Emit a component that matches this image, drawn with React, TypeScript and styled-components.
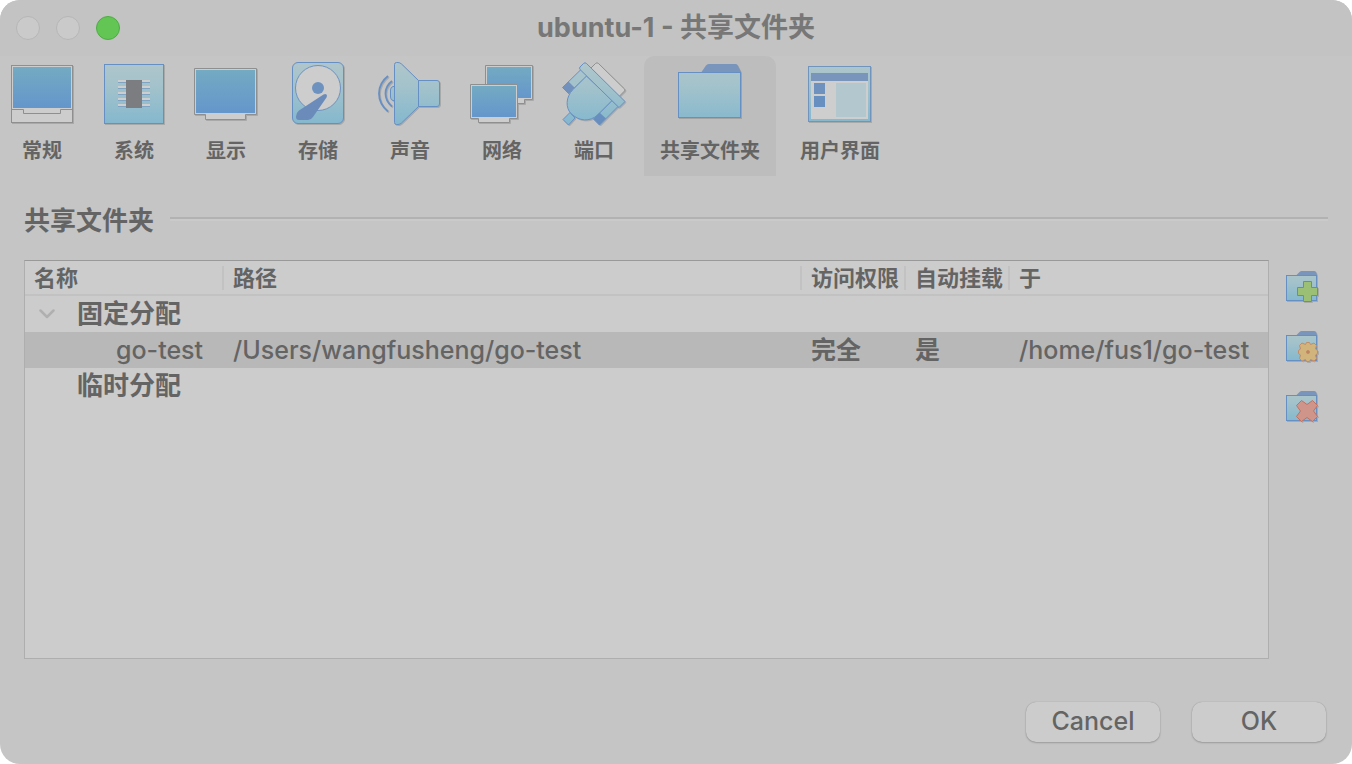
import React, { ReactNode, useState } from 'react';
import styled, { createGlobalStyle } from 'styled-components';

const FONT = 'Inter, "Noto Sans CJK SC", sans-serif';

const GlobalStyle = createGlobalStyle`
  *, *::before, *::after { box-sizing: border-box; }
  body { margin: 0; background: #fff; font-family: ${FONT}; color: #646464; }
  button { font-family: inherit; color: inherit; border: 0; padding: 0; background: none; }
`;

const Window = styled.main`
  display: flex;
  flex-direction: column;
  min-height: 100vh;
  border-radius: 20px;
  overflow: hidden;
  background: #c5c5c5;
`;

const TitleBar = styled.header`
  display: grid;
  grid-template-columns: 1fr auto 1fr;
  align-items: center;
  height: 56px;
  padding: 0 16px;
  background: #c3c3c3;
`;

const Lights = styled.div`
  display: flex;
  gap: 16px;
`;

const Light = styled.button<{ $on?: boolean }>`
  width: 24px;
  height: 24px;
  border-radius: 50%;
  border: 1px solid ${(p) => (p.$on ? '#4fac45' : '#b6b6b6')};
  background: ${(p) => (p.$on ? '#62c554' : '#cacaca')};
`;

const Title = styled.h1`
  margin: 0;
  font-size: 27px;
  line-height: 32px;
  font-weight: 700;
  color: #777;
`;

const Toolbar = styled.nav`
  display: flex;
  gap: 8px;
`;

const Tab = styled.button<{ $active: boolean }>`
  display: flex;
  flex-direction: column;
  align-items: center;
  gap: 10px;
  min-width: 84px;
  height: 120px;
  padding: 6px 10px 0;
  border-radius: 10px 10px 0 0;
  background: ${(p) => (p.$active ? '#bdbdbd' : 'transparent')};
  font-size: 20px;
  line-height: 30px;
  font-weight: 700;
  white-space: nowrap;
`;

const TabLabel = styled.span`
  padding: 0 6px;
`;

const IconSvg = styled.svg`
  display: block;
  flex: none;
  overflow: visible;
  filter: drop-shadow(1px 1px 0 rgba(0, 0, 0, 0.14));
`;

const Section = styled.section`
  display: flex;
  flex: 1;
  flex-direction: column;
  gap: 24px;
  padding: 26px 24px 0;
`;

const Heading = styled.div`
  display: flex;
  align-items: center;
  gap: 16px;
  height: 34px;
`;

const HeadingText = styled.h2`
  margin: 0;
  padding-top: 4px;
  font-size: 26px;
  line-height: 34px;
  font-weight: 700;
`;

const Rule = styled.div`
  flex: 1;
  height: 4px;
  border-top: 2px solid #b2b2b2;
  border-bottom: 2px solid #cacaca;
`;

const Body = styled.div`
  display: flex;
  flex: 1;
  gap: 17px;
`;

const Panel = styled.div`
  flex: 1;
  border: 1px solid #aeaeae;
  border-top-color: #999;
  background: #cccccc;
`;

const Table = styled.table`
  width: 100%;
  table-layout: fixed;
  border-collapse: separate;
  border-spacing: 0;
`;

const Col = styled.col<{ $width?: number }>`
  width: ${(p) => (p.$width ? `${p.$width}px` : 'auto')};
`;

const Head = styled.th`
  position: relative;
  height: 35px;
  padding: 0 0 0 9px;
  border-bottom: 2px solid #c2c2c2;
  text-align: left;
  font-size: 22px;
  line-height: 30px;
  font-weight: 700;
  white-space: nowrap;

  &:not(:last-child)::after {
    content: '';
    position: absolute;
    top: 5px;
    right: 0;
    width: 2px;
    height: 24px;
    background: #c2c2c2;
  }
`;

const Row = styled.tr<{ $selected?: boolean }>`
  background: ${(p) => (p.$selected ? '#b8b8b8' : 'transparent')};
`;

const Cell = styled.td<{ $child?: boolean; $cjk?: boolean }>`
  height: 36px;
  padding: 0 0 0 ${(p) => (p.$child ? 91 : 9)}px;
  font-size: 25px;
  line-height: 36px;
  font-weight: ${(p) => (p.$cjk ? 700 : 500)};
  white-space: nowrap;
`;

const Group = styled.th`
  height: 36px;
  padding: 0 0 0 10px;
  text-align: left;
  font-size: 26px;
  line-height: 36px;
  font-weight: 700;
`;

const GroupLabel = styled.div`
  display: flex;
  align-items: center;
  gap: 18px;
`;

const Expander = styled.button`
  display: flex;
  align-items: center;
  justify-content: center;
  width: 24px;
  height: 24px;
`;

const Spacer = styled.span`
  width: 24px;
`;

const Actions = styled.div`
  display: flex;
  flex-direction: column;
  gap: 28px;
  padding: 10px 10px 0 0;
`;

const Action = styled.button`
  width: 32px;
  height: 32px;
`;

const Footer = styled.footer`
  display: flex;
  justify-content: flex-end;
  gap: 32px;
  padding: 43px 26px 22px;
`;

const PushButton = styled.button`
  width: 134px;
  height: 40px;
  padding-bottom: 2px;
  border-radius: 10px;
  background: #cccccc;
  box-shadow: 0 0 1px rgba(0, 0, 0, 0.25), 0 1px 2px rgba(0, 0, 0, 0.2);
  font-size: 25px;
  line-height: 38px;
  font-weight: 500;
`;

function Icon({ id, size = 64, children }: { id: string; size?: number; children: ReactNode }) {
  return (
    <IconSvg width={size} height={size} viewBox={`0 0 ${size} ${size}`} aria-hidden="true" strokeWidth="1">
      <defs>
        <linearGradient id={`${id}-screen`} x1="0" y1="0" x2="0" y2="1">
          <stop offset="0" stopColor="#74aac2" />
          <stop offset="1" stopColor="#6596cc" />
        </linearGradient>
        <linearGradient id={`${id}-pale`} gradientUnits="userSpaceOnUse" x1="0" y1="0" x2="0" y2={size}>
          <stop offset="0.08" stopColor="#adc5cb" />
          <stop offset="0.4" stopColor="#a2c2cb" />
          <stop offset="0.95" stopColor="#85b8ce" />
        </linearGradient>
        <linearGradient id={`${id}-deep`} gradientUnits="userSpaceOnUse" x1="0" y1="0" x2="0" y2={size}>
          <stop offset="0" stopColor="#7b94ba" />
          <stop offset="1" stopColor="#648dbf" />
        </linearGradient>
      </defs>
      {children}
    </IconSvg>
  );
}

const GeneralIcon = () => (
  <Icon id="general">
    <rect x="1.5" y="3.5" width="61" height="57" fill="#cdcdcd" stroke="#8f8f8f" />
    <rect x="3" y="5" width="58" height="41" fill="url(#general-screen)" />
    <path d="M1.5 47.5H13.5V51.5H50.5V47.5H62.5" fill="none" stroke="#8f8f8f" />
  </Icon>
);

const SystemIcon = () => (
  <Icon id="system">
    <rect x="2.5" y="2.5" width="59" height="59" fill="url(#system-pale)" stroke="#668fc4" />
    {[18, 24, 30, 36, 42].map((y) => (
      <g key={y}>
        <rect x="16" y={y} width="32" height="2" fill="#cecece" />
        <rect x="16" y={y + 2} width="32" height="1" fill="#7fa3c2" />
      </g>
    ))}
    <rect x="24" y="18" width="16" height="28" fill="#7c7d81" />
  </Icon>
);

const DisplayIcon = () => (
  <Icon id="display">
    <path d="M0.5 6.5H62.5V52.5H51.5V57.5H11.5V52.5H0.5Z" fill="#cdcdcd" stroke="#8f8f8f" />
    <rect x="2" y="8" width="59" height="43" fill="url(#display-screen)" />
  </Icon>
);

const StorageIcon = () => (
  <Icon id="storage">
    <rect x="6.5" y="0.5" width="51" height="61" rx="5.5" fill="url(#storage-pale)" stroke="#668fc4" />
    <circle cx="32" cy="26" r="22.5" fill="#cdcdcd" stroke="#7092c0" />
    <circle cx="32" cy="26" r="6" fill="#6e92bf" />
    <path
      d="M37.5 32.5L13 48.5Q10 51 10 54.5V55Q10 58 13 58H22Q25 58 27 55L40.5 35.5Q41.5 33.5 40.5 32.5Q39.5 31.3 37.5 32.5Z"
      fill="#6b8cbb"
    />
  </Icon>
);

const SoundIcon = () => (
  <Icon id="sound">
    <path d="M17 24.5H15Q12.5 25 12.5 28V35Q12.5 38 15 38.5H17Z" fill="url(#sound-pale)" stroke="#668fc4" />
    <path d="M40 18.5H59Q61.5 18.5 61.5 21V42Q61.5 44.5 59 44.5H40Z" fill="url(#sound-pale)" stroke="#668fc4" />
    <path
      d="M16.5 2.5Q16.5 0.5 18.5 0.5H20Q22 0.5 23.5 2L40.5 18.5V44.5L23.5 61Q22 62.5 20 62.5H18.5Q16.5 62.5 16.5 60.5Z"
      fill="url(#sound-pale)"
      stroke="#668fc4"
    />
    <path d="M10 14Q1 21 1 31.5T10 49.5M14 19Q7.5 24 7.5 31.5T14 44.5" fill="none" stroke="#668fc4" strokeWidth="1.8" />
  </Icon>
);

const NetworkIcon = () => (
  <Icon id="network">
    <path d="M15.5 3.5H62.5V37.5H54.5V41.5H22V37.5H15.5Z" fill="#cdcdcd" stroke="#8f8f8f" />
    <rect x="17" y="5" width="44" height="31" fill="url(#network-screen)" />
    <path d="M0.5 22.5H47.5V56.5H39.5V60.5H8.5V56.5H0.5Z" fill="#cdcdcd" stroke="#8f8f8f" />
    <rect x="2" y="24" width="44" height="31" fill="url(#network-screen)" />
  </Icon>
);

const PortIcon = () => (
  <Icon id="port">
    <path d="M28 7L33.5 1.5Q35 0 36.5 1.5L62.5 27Q63.5 28 62.5 29L57 34.5Z" fill="#cdcdcd" stroke="#8f8f8f" />
    <g fill="url(#port-pale)" stroke="#668fc4" strokeLinejoin="round">
      <path d="M8 50.5L1 57.5L6.5 63L13 56Z" />
      <path d="M19 7.5L0.5 25.5L6.5 31.5L25 14Z" />
      <path d="M50 38.5L56 44.5L37.5 63L31.5 57Z" />
      <path d="M24.5 14L11 27.5C3.5 35 3.5 46 9 51.5C17 59.5 28 60 35.5 53L50 38.5Z" />
      <path d="M21.5 1.5Q23 0 24.5 1.5L63 39.5L57 45.5L18 7.5Q17 6 18 5Z" />
    </g>
    <path d="M0.5 25.5L6.5 19.5L12.5 25.5L6.5 31.5ZM31.5 57L37.5 50.5L44 56.5L37.5 63Z" fill="url(#port-deep)" />
  </Icon>
);

const FolderIcon = () => (
  <Icon id="folder">
    <path d="M23.5 10L28 3.5Q29 2 30.5 2H57.5Q59 2 59.5 3L63 10Z" fill="#7995bb" />
    <rect x="0.5" y="10.5" width="62" height="45" fill="url(#folder-pale)" stroke="#668fc4" />
  </Icon>
);

const InterfaceIcon = () => (
  <Icon id="interface">
    <rect x="0.5" y="4.5" width="62" height="55" fill="url(#interface-pale)" stroke="#7194bf" />
    <rect x="3" y="19" width="57" height="38" fill="#cecece" />
    <rect x="3" y="11" width="57" height="8" fill="#7995bb" />
    <rect x="6" y="21" width="11" height="11" fill="#6e91bd" />
    <rect x="6" y="34" width="11" height="11" fill="#678fbf" />
    <rect x="28" y="21" width="30" height="34" fill="#b2c7ce" />
  </Icon>
);

function SmallFolder({ id, children }: { id: string; children: ReactNode }) {
  return (
    <Icon id={id} size={32}>
      <path d="M10.5 5L13.5 2Q14.5 1 15.5 1H28Q29.5 1 30 2L31 5Z" fill="#7995bb" />
      <rect x="0.5" y="5.5" width="30" height="25" fill={`url(#${id}-pale)`} stroke="#668fc4" />
      {children}
    </Icon>
  );
}

const AddIcon = () => (
  <SmallFolder id="add">
    <path
      d="M17.5 11.5H25.5V17.5H31.5V25.5H25.5V31.5H17.5V25.5H11.5V17.5H17.5Z"
      fill="#9cbf76"
      stroke="#6b9a55"
    />
  </SmallFolder>
);

const EditIcon = () => (
  <SmallFolder id="edit">
    <path
      d="M20.5 12.5H23.5L24.5 14.5L28 13L30.5 15.5L29.5 19L31.5 20.5V23.5L29.5 25L30.5 28.5L28 31L24.5 29.5L23.5 31.5H20.5L19.5 29.5L16 31L13.5 28.5L14.5 25L12.5 23.5V20.5L14.5 19L13.5 15.5L16 13L19.5 14.5Z"
      fill="#d0b47c"
      stroke="#c58a66"
      strokeLinejoin="round"
    />
    <circle cx="22" cy="22" r="1.5" fill="#b98560" stroke="#c58a66" />
  </SmallFolder>
);

const RemoveIcon = () => (
  <SmallFolder id="remove">
    <path
      d="M15.5 10.5L21 14.5L26.5 10.5L31.5 15.5L27.500 21L31.5 26.5L26.5 31.5L21 27.500L15.5 31.5L10.5 26.5L14.5 21L10.5 15.5Z"
      fill="#d0958a"
      stroke="#c2705f"
      strokeLinejoin="round"
    />
  </SmallFolder>
);

const TABS: { label: string; icon: ReactNode }[] = [
  { label: '常规', icon: <GeneralIcon /> },
  { label: '系统', icon: <SystemIcon /> },
  { label: '显示', icon: <DisplayIcon /> },
  { label: '存储', icon: <StorageIcon /> },
  { label: '声音', icon: <SoundIcon /> },
  { label: '网络', icon: <NetworkIcon /> },
  { label: '端口', icon: <PortIcon /> },
  { label: '共享文件夹', icon: <FolderIcon /> },
  { label: '用户界面', icon: <InterfaceIcon /> },
];

export default function App() {
  const [active, setActive] = useState('共享文件夹');
  return (
    <>
      <GlobalStyle />
      <Window>
        <TitleBar>
          <Lights>
            <Light aria-label="Close" />
            <Light aria-label="Minimize" />
            <Light aria-label="Zoom" $on />
          </Lights>
          <Title>ubuntu-1 - 共享文件夹</Title>
        </TitleBar>
        <Toolbar>
          {TABS.map((tab) => (
            <Tab
              key={tab.label}
              $active={tab.label === active}
              aria-pressed={tab.label === active}
              onClick={() => setActive(tab.label)}
            >
              {tab.icon}
              <TabLabel>{tab.label}</TabLabel>
            </Tab>
          ))}
        </Toolbar>
        <Section>
          <Heading>
            <HeadingText>共享文件夹</HeadingText>
            <Rule />
          </Heading>
          <Body>
            <Panel>
              <Table>
                <colgroup>
                  <Col $width={199} />
                  <Col />
                  <Col $width={104} />
                  <Col $width={104} />
                  <Col $width={258} />
                </colgroup>
                <thead>
                  <tr>
                    <Head scope="col">名称</Head>
                    <Head scope="col">路径</Head>
                    <Head scope="col">访问权限</Head>
                    <Head scope="col">自动挂载</Head>
                    <Head scope="col">于</Head>
                  </tr>
                </thead>
                <tbody>
                  <Row>
                    <Group colSpan={5} scope="rowgroup">
                      <GroupLabel>
                        <Expander aria-label="固定分配" aria-expanded="true">
                          <svg width="16" height="10" viewBox="0 0 16 10" fill="none" aria-hidden="true">
                            <path
                              d="M1.5 1.5L8 8L14.5 1.5"
                              stroke="#b0b0b0"
                              strokeWidth="2.5"
                              strokeLinecap="round"
                              strokeLinejoin="round"
                            />
                          </svg>
                        </Expander>
                        固定分配
                      </GroupLabel>
                    </Group>
                  </Row>
                  <Row $selected>
                    <Cell $child>go-test</Cell>
                    <Cell>/Users/wangfusheng/go-test</Cell>
                    <Cell $cjk>完全</Cell>
                    <Cell $cjk>是</Cell>
                    <Cell>/home/fus1/go-test</Cell>
                  </Row>
                  <Row>
                    <Group colSpan={5} scope="rowgroup">
                      <GroupLabel>
                        <Spacer />
                        临时分配
                      </GroupLabel>
                    </Group>
                  </Row>
                </tbody>
              </Table>
            </Panel>
            <Actions>
              <Action aria-label="Add shared folder">
                <AddIcon />
              </Action>
              <Action aria-label="Edit shared folder">
                <EditIcon />
              </Action>
              <Action aria-label="Remove shared folder">
                <RemoveIcon />
              </Action>
            </Actions>
          </Body>
        </Section>
        <Footer>
          <PushButton>Cancel</PushButton>
          <PushButton>OK</PushButton>
        </Footer>
      </Window>
    </>
  );
}
